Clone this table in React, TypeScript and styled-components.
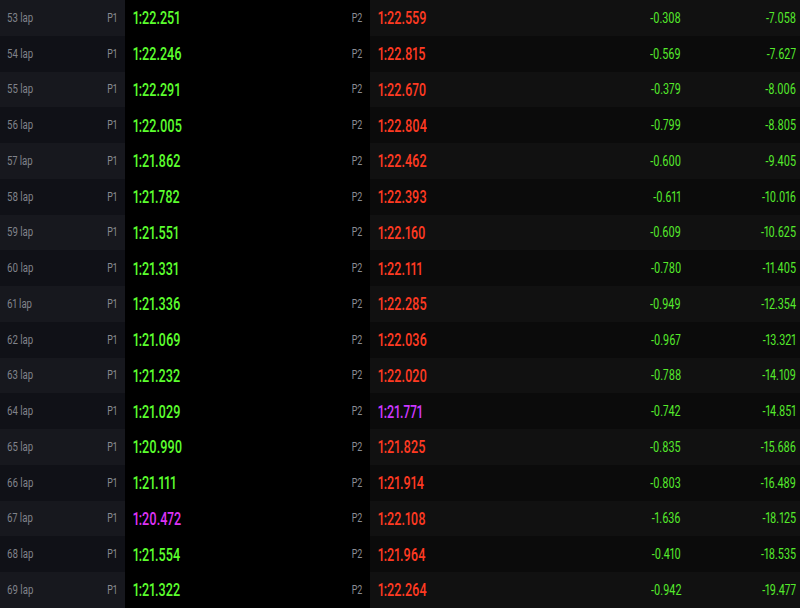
import React from "react";
import styled, { createGlobalStyle } from "styled-components";

const GlobalStyle = createGlobalStyle`
  html, body {
    margin: 0;
    padding: 0;
    background: #000000;
  }
  body {
    font-family: Roboto, "Liberation Sans", sans-serif;
    overflow: hidden;
  }
`;

type Lap = {
  lap: number;
  t1: string;
  t2: string;
  delta: string;
  gap: string;
  best1?: boolean;
  best2?: boolean;
};

const laps: Lap[] = [
  { lap: 53, t1: "1:22.251", t2: "1:22.559", delta: "-0.308", gap: "-7.058" },
  { lap: 54, t1: "1:22.246", t2: "1:22.815", delta: "-0.569", gap: "-7.627" },
  { lap: 55, t1: "1:22.291", t2: "1:22.670", delta: "-0.379", gap: "-8.006" },
  { lap: 56, t1: "1:22.005", t2: "1:22.804", delta: "-0.799", gap: "-8.805" },
  { lap: 57, t1: "1:21.862", t2: "1:22.462", delta: "-0.600", gap: "-9.405" },
  { lap: 58, t1: "1:21.782", t2: "1:22.393", delta: "-0.611", gap: "-10.016" },
  { lap: 59, t1: "1:21.551", t2: "1:22.160", delta: "-0.609", gap: "-10.625" },
  { lap: 60, t1: "1:21.331", t2: "1:22.111", delta: "-0.780", gap: "-11.405" },
  { lap: 61, t1: "1:21.336", t2: "1:22.285", delta: "-0.949", gap: "-12.354" },
  { lap: 62, t1: "1:21.069", t2: "1:22.036", delta: "-0.967", gap: "-13.321" },
  { lap: 63, t1: "1:21.232", t2: "1:22.020", delta: "-0.788", gap: "-14.109" },
  { lap: 64, t1: "1:21.029", t2: "1:21.771", delta: "-0.742", gap: "-14.851", best2: true },
  { lap: 65, t1: "1:20.990", t2: "1:21.825", delta: "-0.835", gap: "-15.686" },
  { lap: 66, t1: "1:21.111", t2: "1:21.914", delta: "-0.803", gap: "-16.489" },
  { lap: 67, t1: "1:20.472", t2: "1:22.108", delta: "-1.636", gap: "-18.125", best1: true },
  { lap: 68, t1: "1:21.554", t2: "1:21.964", delta: "-0.410", gap: "-18.535" },
  { lap: 69, t1: "1:21.322", t2: "1:22.264", delta: "-0.942", gap: "-19.477" },
];

export default function App() {
  return (
    <>
      <GlobalStyle />
      <Table>
        {laps.map((l, i) => (
          <Row key={l.lap}>
            <LapCell $odd={i % 2 === 1}>
              <LapLabel>{l.lap} lap</LapLabel>
              <PosLabel>P1</PosLabel>
            </LapCell>
            <LeadCell>
              <Time $color={l.best1 ? "#dd33f5" : "#5cff2e"}>{l.t1}</Time>
              <PosLabel>P2</PosLabel>
            </LeadCell>
            <ChaseCell $odd={i % 2 === 1}>
              <Time $color={l.best2 ? "#cc38ff" : "#ff3a22"}>{l.t2}</Time>
              <Delta>{l.delta}</Delta>
              <Gap>{l.gap}</Gap>
            </ChaseCell>
          </Row>
        ))}
      </Table>
    </>
  );
}

const Table = styled.div`
  display: flex;
  flex-direction: column;
  width: 800px;
`;

const Row = styled.div`
  display: grid;
  grid-template-columns: 125px 245px 1fr;
  height: 35.75px;
`;

const Cell = styled.div`
  display: flex;
  align-items: center;
  padding: 0 8px;
`;

const LapCell = styled(Cell)<{ $odd: boolean }>`
  justify-content: space-between;
  padding: 0 8px 0 7px;
  background: ${(p) => (p.$odd ? "#101117" : "#17181e")};
`;

const LeadCell = styled(Cell)`
  justify-content: space-between;
  background: #000000;
`;

const ChaseCell = styled(Cell)<{ $odd: boolean }>`
  padding: 0 4px 0 8px;
  background: ${(p) => (p.$odd ? "#0b0b0b" : "#111111")};
`;

const Squeezed = styled.span`
  display: inline-block;
  white-space: nowrap;
  font-variant-numeric: proportional-nums;
`;

const LapLabel = styled(Squeezed)`
  font-size: 12px;
  color: #80838b;
  transform: scaleX(0.8);
  transform-origin: left center;
`;

const PosLabel = styled(Squeezed)`
  font-size: 12px;
  color: #8a8c93;
  transform: scaleX(0.74);
  transform-origin: right center;
`;

const Time = styled(Squeezed)<{ $color: string }>`
  flex: 1;
  font-size: 18px;
  font-weight: 500;
  color: ${(p) => p.$color};
  transform: scaleX(0.7);
  transform-origin: left center;
`;

const Delta = styled(Squeezed)`
  font-size: 14px;
  color: #55ea2c;
  text-align: right;
  transform: scaleX(0.77);
  transform-origin: right center;
`;

const Gap = styled(Squeezed)`
  width: 115px;
  font-size: 14px;
  color: #55ea2c;
  text-align: right;
  transform: scaleX(0.77);
  transform-origin: right center;
`;
